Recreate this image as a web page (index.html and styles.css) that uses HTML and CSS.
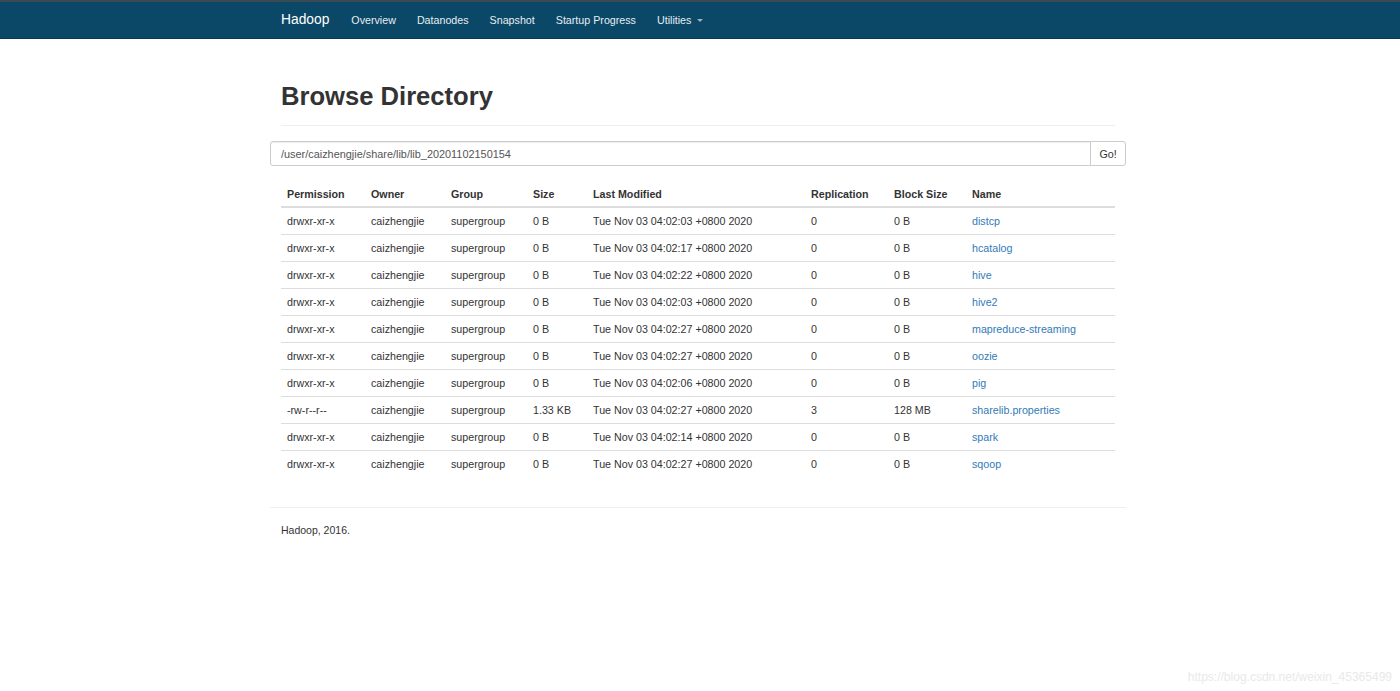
FILE: index.html
```html
<!DOCTYPE html>
<html>
<head>
<meta charset="utf-8">
<title>Browsing HDFS</title>
<link rel="stylesheet" href="styles.css">
</head>
<body>
<header class="navbar">
  <div class="container nav-inner">
    <span class="brand">Hadoop</span>
    <ul class="nav">
      <li>Overview</li>
      <li>Datanodes</li>
      <li>Snapshot</li>
      <li>Startup Progress</li>
      <li class="dropdown">Utilities <span class="caret"></span></li>
    </ul>
  </div>
</header>

<main class="container">
  <div class="page-header">
    <h1>Browse Directory</h1>
  </div>

  <form class="input-group">
    <input class="form-control" type="text" value="/user/caizhengjie/share/lib/lib_20201102150154">
    <button class="btn" type="button">Go!</button>
  </form>

  <div class="table-wrap">
    <table class="table">
      <thead>
        <tr>
          <th class="c1">Permission</th>
          <th class="c2">Owner</th>
          <th class="c3">Group</th>
          <th class="c4">Size</th>
          <th class="c5">Last Modified</th>
          <th class="c6">Replication</th>
          <th class="c7">Block Size</th>
          <th class="c8">Name</th>
        </tr>
      </thead>
      <tbody>
        <tr><td>drwxr-xr-x</td><td>caizhengjie</td><td>supergroup</td><td>0 B</td><td>Tue Nov 03 04:02:03 +0800 2020</td><td>0</td><td>0 B</td><td><a>distcp</a></td></tr>
        <tr><td>drwxr-xr-x</td><td>caizhengjie</td><td>supergroup</td><td>0 B</td><td>Tue Nov 03 04:02:17 +0800 2020</td><td>0</td><td>0 B</td><td><a>hcatalog</a></td></tr>
        <tr><td>drwxr-xr-x</td><td>caizhengjie</td><td>supergroup</td><td>0 B</td><td>Tue Nov 03 04:02:22 +0800 2020</td><td>0</td><td>0 B</td><td><a>hive</a></td></tr>
        <tr><td>drwxr-xr-x</td><td>caizhengjie</td><td>supergroup</td><td>0 B</td><td>Tue Nov 03 04:02:03 +0800 2020</td><td>0</td><td>0 B</td><td><a>hive2</a></td></tr>
        <tr><td>drwxr-xr-x</td><td>caizhengjie</td><td>supergroup</td><td>0 B</td><td>Tue Nov 03 04:02:27 +0800 2020</td><td>0</td><td>0 B</td><td><a>mapreduce-streaming</a></td></tr>
        <tr><td>drwxr-xr-x</td><td>caizhengjie</td><td>supergroup</td><td>0 B</td><td>Tue Nov 03 04:02:27 +0800 2020</td><td>0</td><td>0 B</td><td><a>oozie</a></td></tr>
        <tr><td>drwxr-xr-x</td><td>caizhengjie</td><td>supergroup</td><td>0 B</td><td>Tue Nov 03 04:02:06 +0800 2020</td><td>0</td><td>0 B</td><td><a>pig</a></td></tr>
        <tr><td>-rw-r--r--</td><td>caizhengjie</td><td>supergroup</td><td>1.33 KB</td><td>Tue Nov 03 04:02:27 +0800 2020</td><td>3</td><td>128 MB</td><td><a>sharelib.properties</a></td></tr>
        <tr><td>drwxr-xr-x</td><td>caizhengjie</td><td>supergroup</td><td>0 B</td><td>Tue Nov 03 04:02:14 +0800 2020</td><td>0</td><td>0 B</td><td><a>spark</a></td></tr>
        <tr><td>drwxr-xr-x</td><td>caizhengjie</td><td>supergroup</td><td>0 B</td><td>Tue Nov 03 04:02:27 +0800 2020</td><td>0</td><td>0 B</td><td><a>sqoop</a></td></tr>
      </tbody>
    </table>
  </div>

  <hr class="rule">
  <footer class="footer">Hadoop, 2016.</footer>
</main>

<div class="watermark">https://blog.csdn.net/weixin_45365499</div>
</body>
</html>
```

FILE: styles.css
```css
* { box-sizing: border-box; }
html, body {
  margin: 0;
  padding: 0;
  background: #fff;
  font-family: "Liberation Sans", Arial, sans-serif;
  font-size: 10.7px;
  color: #333;
}
.container {
  width: 856px;
  margin-left: calc(50% - 430px);
}
.navbar {
  height: 39px;
  background: #0b4867;
  border-top: 2px solid #3a4a55;
  border-bottom: 1px solid #083650;
}
.nav-inner {
  display: flex;
  align-items: center;
  height: 100%;
  padding-left: 11px;
}
.brand {
  color: #fff;
  font-size: 13.8px;
  margin-right: 22px;
  padding-bottom: 2px;
}
.nav {
  list-style: none;
  margin: 0;
  padding: 0;
  display: flex;
}
.nav li {
  color: #e6edf2;
  font-size: 10.7px;
  margin-right: 21px;
  padding-bottom: 1px;
}
.caret {
  display: inline-block;
  width: 0;
  height: 0;
  margin-left: 3px;
  vertical-align: middle;
  border-top: 3px solid #9fb4c2;
  border-left: 3px solid transparent;
  border-right: 3px solid transparent;
}
.page-header {
  margin: 0 11px;
  padding-top: 43px;
  padding-bottom: 15px;
  border-bottom: 1px solid #eee;
}
.page-header h1 {
  margin: 0;
  font-size: 25.6px;
  font-weight: bold;
  line-height: 1.1;
  color: #333;
}
.input-group {
  display: flex;
  margin-top: 15px;
  height: 25px;
}
.form-control {
  flex: 1;
  height: 25px;
  border: 1px solid #ccc;
  border-radius: 3px 0 0 3px;
  padding: 0 10px;
  font-family: inherit;
  font-size: 10.9px;
  color: #555;
  box-shadow: inset 0 1px 1px rgba(0,0,0,0.075);
  outline: none;
}
.btn {
  width: 36px;
  height: 25px;
  margin-left: -1px;
  border: 1px solid #ccc;
  border-radius: 0 3px 3px 0;
  background: #fff;
  font-family: inherit;
  font-size: 10.7px;
  color: #333;
  padding: 0;
}
.table-wrap {
  padding: 0 11px;
  margin-top: 14px;
}
.table {
  width: 100%;
  border-collapse: collapse;
  table-layout: fixed;
}
.table th, .table td {
  text-align: left;
  padding: 0 6px;
  height: 27px;
  white-space: nowrap;
}
.table th {
  font-weight: bold;
  border-bottom: 2px solid #ddd;
  vertical-align: middle;
  padding-top: 1px;
}
.table td {
  border-top: 1px solid #ddd;
  vertical-align: middle;
}
.table tbody tr:first-child td { border-top: 0; }
.c1 { width: 84px; }
.c2 { width: 80px; }
.c3 { width: 82px; }
.c4 { width: 60px; }
.c5 { width: 218px; }
.c6 { width: 83px; }
.c7 { width: 78px; }
.c8 { width: 149px; }
.table a {
  color: #337ab7;
  text-decoration: none;
}
.rule {
  margin: 30px 0 0 0;
  border: 0;
  border-top: 1px solid #eee;
}
.footer {
  padding: 16px 11px;
  font-size: 10.5px;
}
.watermark {
  position: absolute;
  right: 8px;
  top: 670px;
  font-size: 12px;
  color: #e9e9e9;
}
```
